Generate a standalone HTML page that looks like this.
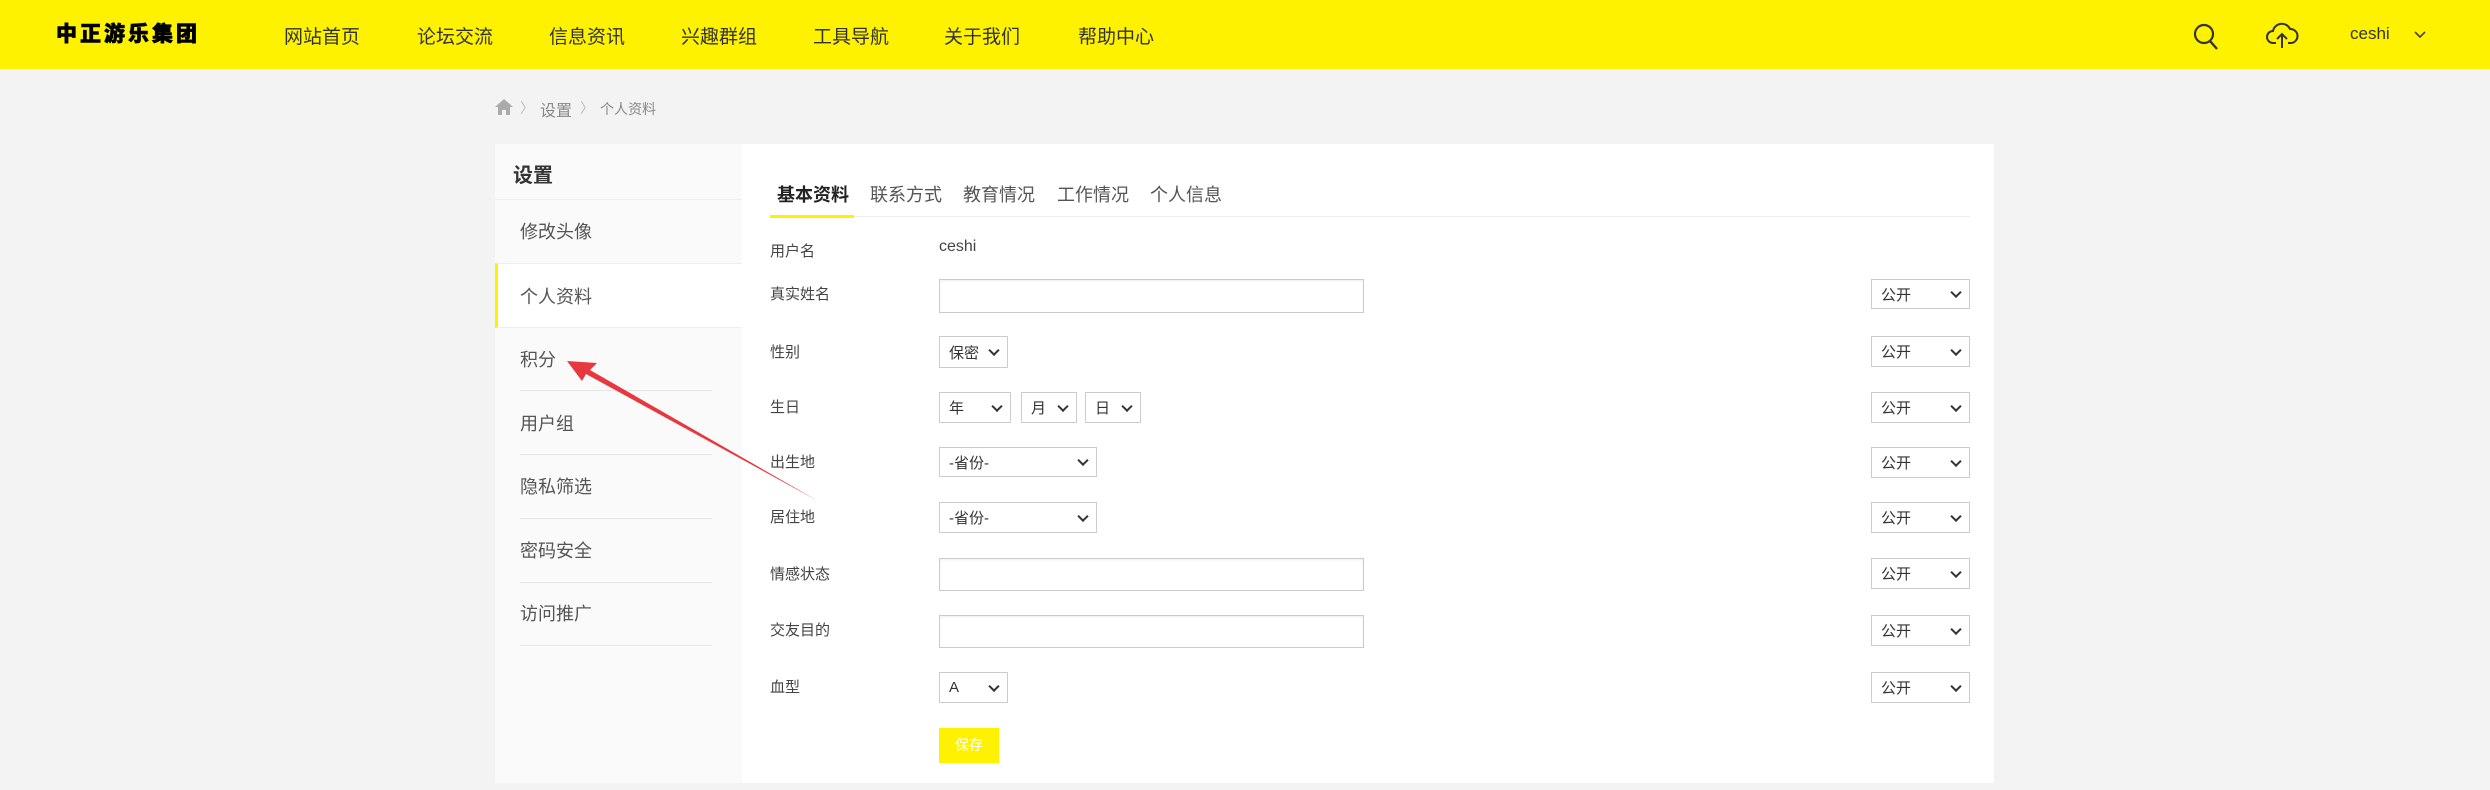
<!DOCTYPE html>
<html><head><meta charset="utf-8"><style>
*{margin:0;padding:0;box-sizing:border-box}
body{width:2490px;height:790px;background:#f3f3f3;position:relative;overflow:hidden;font-family:"Liberation Sans","Noto Sans CJK SC",sans-serif;color:#333}
.a{position:absolute;white-space:nowrap}
#hd{position:absolute;left:0;top:0;width:2490px;height:69px;background:#fff200}
.nav{font-size:19px;color:#333;top:22px}
.side{position:absolute;left:495px;top:144px;width:247px;height:639px;background:#fafafa}
.main{position:absolute;left:742px;top:144px;width:1252px;height:639px;background:#fff}
.si{font-size:18px;color:#555;left:520px}
.sep{position:absolute;left:520px;width:192px;height:1px;background:#e6e6e6}
.tab{font-size:18px;color:#555;top:181px}
.lb{font-size:15px;color:#444;left:770px}
.inp{position:absolute;border:1px solid #ccc;background:#fff;box-shadow:inset 0 1px 2px #eee}
.sel{position:absolute;border:1px solid #ccc;background:#fff;font-size:15px;color:#333;padding-left:9px;display:flex;align-items:center}
.sel:after{content:"";position:absolute;right:9px;top:50%;width:6px;height:6px;border-right:2px solid #333;border-bottom:2px solid #333;transform:translateY(-70%) rotate(45deg)}
</style></head><body>
<div id="hd"></div>
<div class="a" style="left:56px;top:18px;font-size:21px;font-weight:900;letter-spacing:3px;color:#000;font-family:'Noto Sans CJK SC',sans-serif;-webkit-text-stroke:0.6px #000">中正游乐集团</div>
<div class="a nav" style="left:284px">网站首页</div>
<div class="a nav" style="left:417px">论坛交流</div>
<div class="a nav" style="left:549px">信息资讯</div>
<div class="a nav" style="left:681px">兴趣群组</div>
<div class="a nav" style="left:813px">工具导航</div>
<div class="a nav" style="left:944px">关于我们</div>
<div class="a nav" style="left:1078px">帮助中心</div>
<svg class="a" style="left:2192px;top:23px" width="30" height="28" viewBox="0 0 30 28"><circle cx="12" cy="11" r="9" fill="none" stroke="#333" stroke-width="2.2"/><path d="M18 18l7 8" stroke="#333" stroke-width="2.4"/></svg>
<svg class="a" style="left:2265px;top:21px" width="34" height="28" viewBox="0 0 34 28"><path d="M11 22H8a6 6 0 0 1 0-12a9 9 0 0 1 17-2a7 7 0 0 1 1 14h-3" fill="none" stroke="#333" stroke-width="2"/><path d="M17 27V13M12 18l5-5 5 5" fill="none" stroke="#333" stroke-width="2"/></svg>
<div class="a" style="left:2350px;top:24px;font-size:17px;color:#333">ceshi</div>
<svg class="a" style="left:2413px;top:30px" width="14" height="10" viewBox="0 0 14 10"><path d="M2 2l5 5 5-5" fill="none" stroke="#444" stroke-width="1.6"/></svg>

<svg class="a" style="left:494px;top:98px" width="20" height="18" viewBox="0 0 20 18"><path d="M10 1L1 9h3v8h4v-5h4v5h4V9h3z" fill="#aaa"/></svg>
<div class="a" style="left:520px;top:98px;font-size:14px;color:#bbb">〉</div>
<div class="a" style="left:540px;top:97px;font-size:16px;color:#888">设置</div>
<div class="a" style="left:580px;top:98px;font-size:14px;color:#bbb">〉</div>
<div class="a" style="left:600px;top:99px;font-size:14px;color:#888">个人资料</div>

<div class="side"></div>
<div class="main"></div>
<div class="a" style="left:513px;top:159px;font-size:20px;font-weight:bold;color:#333">设置</div>
<div class="a" style="left:495px;top:199px;width:247px;height:1px;background:#eee"></div>
<div class="a si" style="top:218px">修改头像</div>
<div class="a" style="left:495px;top:263px;width:247px;height:65px;background:#fff;border-left:3px solid #fff200;border-top:1px solid #eee;border-bottom:1px solid #eee"></div>
<div class="a si" style="top:283px">个人资料</div>
<div class="a si" style="top:346px">积分</div>
<div class="sep" style="top:390px"></div>
<div class="a si" style="top:410px">用户组</div>
<div class="sep" style="top:454px"></div>
<div class="a si" style="top:473px">隐私筛选</div>
<div class="sep" style="top:518px"></div>
<div class="a si" style="top:537px">密码安全</div>
<div class="sep" style="top:582px"></div>
<div class="a si" style="top:600px">访问推广</div>
<div class="sep" style="top:645px"></div>

<div class="a tab" style="left:777px;font-weight:bold;color:#222">基本资料</div>
<div class="a tab" style="left:870px">联系方式</div>
<div class="a tab" style="left:963px">教育情况</div>
<div class="a tab" style="left:1057px">工作情况</div>
<div class="a tab" style="left:1150px">个人信息</div>
<div class="a" style="left:770px;top:216px;width:1200px;height:1px;background:#eee"></div>
<div class="a" style="left:770px;top:215px;width:84px;height:3px;background:#fff200"></div>

<div class="a lb" style="top:240px">用户名</div>
<div class="a" style="left:939px;top:238px;font-size:16px;color:#444">ceshi</div>
<div class="a lb" style="top:283px">真实姓名</div>
<div class="inp" style="left:939px;top:279px;width:425px;height:34px"></div>
<div class="a lb" style="top:341px">性别</div>
<div class="sel" style="left:939px;top:336px;width:69px;height:32px">保密</div>
<div class="a lb" style="top:396px">生日</div>
<div class="sel" style="left:939px;top:392px;width:72px;height:31px">年</div>
<div class="sel" style="left:1021px;top:392px;width:56px;height:31px">月</div>
<div class="sel" style="left:1085px;top:392px;width:56px;height:31px">日</div>
<div class="a lb" style="top:451px">出生地</div>
<div class="sel" style="left:939px;top:447px;width:158px;height:30px">-省份-</div>
<div class="a lb" style="top:506px">居住地</div>
<div class="sel" style="left:939px;top:502px;width:158px;height:31px">-省份-</div>
<div class="a lb" style="top:563px">情感状态</div>
<div class="inp" style="left:939px;top:558px;width:425px;height:33px"></div>
<div class="a lb" style="top:619px">交友目的</div>
<div class="inp" style="left:939px;top:615px;width:425px;height:33px"></div>
<div class="a lb" style="top:676px">血型</div>
<div class="sel" style="left:939px;top:672px;width:69px;height:31px">A</div>
<div class="a" style="left:939px;top:728px;width:60px;height:35px;background:#fff200;color:#fff;font-size:14px;text-align:center;line-height:35px">保存</div>

<div class="sel" style="left:1871px;top:279px;width:99px;height:30px">公开</div>
<div class="sel" style="left:1871px;top:336px;width:99px;height:31px">公开</div>
<div class="sel" style="left:1871px;top:392px;width:99px;height:31px">公开</div>
<div class="sel" style="left:1871px;top:447px;width:99px;height:31px">公开</div>
<div class="sel" style="left:1871px;top:502px;width:99px;height:31px">公开</div>
<div class="sel" style="left:1871px;top:558px;width:99px;height:31px">公开</div>
<div class="sel" style="left:1871px;top:615px;width:99px;height:31px">公开</div>
<div class="sel" style="left:1871px;top:672px;width:99px;height:31px">公开</div>

<svg class="a" style="left:0;top:0" width="2490" height="790"><polygon points="567,361 597,363 590,370 818,501 586,374 582,381" fill="#e8383d"/></svg>
</body></html>
